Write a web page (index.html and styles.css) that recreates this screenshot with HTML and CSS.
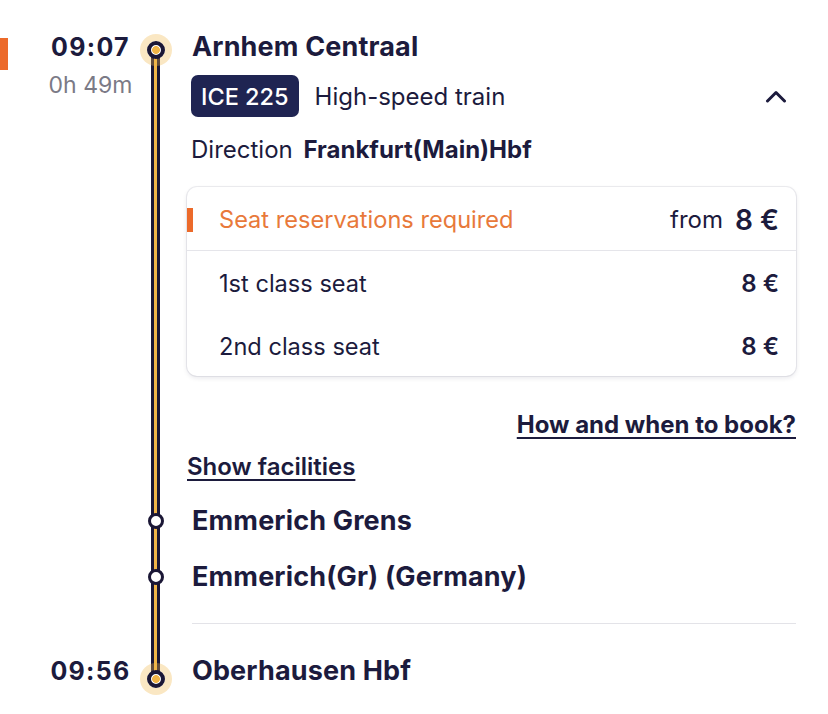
FILE: index.html
```html
<!DOCTYPE html>
<html lang="en">
<head>
<meta charset="utf-8">
<title>Journey leg</title>
<link rel="stylesheet" href="styles.css">
</head>
<body>
<main class="leg">
  <section class="stop stop--origin">
    <div class="flag-col"><span class="flag"></span></div>
    <div class="time-col">
      <div class="time">09:07</div>
      <div class="duration">0h 49m</div>
    </div>
    <div class="track track--start"><span class="node node--major node--start"></span></div>
    <div class="body">
      <div class="stop-name">Arnhem Centraal</div>
      <div class="head">
        <div class="train">
          <span class="badge">ICE 225</span>
          <span class="train-type">High-speed train</span>
          <svg class="chevron" width="22" height="13" viewBox="0 0 22 13" aria-hidden="true"><polyline points="2.5,11 11,2.5 19.5,11" fill="none" stroke="#1c1b3d" stroke-width="3" stroke-linecap="round" stroke-linejoin="round"/></svg>
        </div>
        <div class="direction">Direction <strong class="dir-dest">Frankfurt(Main)Hbf</strong></div>
      </div>
      <div class="fare-card">
        <div class="fare-head">
          <span class="fare-flag"></span>
          <span class="fare-note">Seat reservations required</span>
          <span class="from">from</span>
          <span class="price price--big">8 €</span>
        </div>
        <div class="fare-row"><span>1st class seat</span><span class="price">8 €</span></div>
        <div class="fare-row"><span>2nd class seat</span><span class="price">8 €</span></div>
      </div>
      <div class="book"><a href="#" class="link">How and when to book?</a></div>
      <div class="facilities"><a href="#" class="link">Show facilities</a></div>
    </div>
  </section>

  <section class="stop stop--via">
    <div class="flag-col"></div>
    <div class="time-col"></div>
    <div class="track"><span class="node node--minor"></span></div>
    <div class="body"><div class="stop-name">Emmerich Grens</div></div>
  </section>

  <section class="stop stop--via">
    <div class="flag-col"></div>
    <div class="time-col"></div>
    <div class="track"><span class="node node--minor"></span></div>
    <div class="body"><div class="stop-name">Emmerich(Gr) (Germany)</div></div>
  </section>

  <section class="stop stop--sep">
    <div class="flag-col"></div>
    <div class="time-col"></div>
    <div class="track"></div>
    <div class="body"><hr class="divider"></div>
  </section>

  <section class="stop stop--dest">
    <div class="flag-col"></div>
    <div class="time-col"><div class="time">09:56</div></div>
    <div class="track track--end"><span class="node node--major node--end"></span></div>
    <div class="body"><div class="stop-name">Oberhausen Hbf</div></div>
  </section>
</main>
</body>
</html>
```

FILE: styles.css
```css
* { box-sizing: border-box; }

body {
  margin: 0;
  background: #ffffff;
  font-family: Inter, "Noto Sans", "Liberation Sans", sans-serif;
  color: #1c1b3d;
}

.leg {
  padding: 33px 32px 0 0;
}

.stop {
  display: grid;
  grid-template-columns: 46px 89px 40px 1fr;
}

.flag {
  display: block;
  width: 8px;
  height: 32px;
  margin-top: 5px;
  background: #ec6a2a;
}

.time-col {
  text-align: center;
}

.time {
  font-size: 25px;
  font-weight: 700;
  line-height: 28px;
  letter-spacing: 1.3px;
}

.duration {
  margin-top: 10px;
  font-size: 23px;
  line-height: 28px;
  color: #7b7a86;
}

/* timeline */
.track {
  position: relative;
}

.track::before {
  content: "";
  position: absolute;
  left: 16px;
  width: 9px;
  top: 0;
  bottom: 0;
  background: linear-gradient(to right, #1b1736 0 3px, #f1b548 3px 6px, #1b1736 6px 9px);
}

.track--start::before { top: 17px; }
.track--end::before { bottom: auto; height: 38px; }

.node {
  position: absolute;
  left: 20.5px;
  border-radius: 50%;
  transform: translate(-50%, -50%);
}

.node--major {
  width: 18px;
  height: 18px;
  border: 4px solid #1b1736;
  background: radial-gradient(circle, #f1b548 0 3.6px, #ffffff 4.2px);
  box-shadow: 0 0 0 7px rgba(241, 181, 72, 0.33);
}

.node--start { top: 17px; }
.node--end { top: 38px; }

.node--minor {
  top: 28px;
  width: 16px;
  height: 16px;
  border: 3px solid #1b1736;
  background: #ffffff;
}

/* body column */
.body {
  padding-left: 12px;
  min-width: 0;
}

.stop--origin .body { padding-bottom: 13px; }

.head { padding-left: 4px; }

.stop-name {
  padding-left: 5px;
  font-size: 27px;
  font-weight: 700;
  line-height: 28px;
  letter-spacing: 0.15px;
}

.train {
  display: flex;
  align-items: center;
  margin-top: 14px;
}

.badge {
  display: flex;
  align-items: center;
  height: 42px;
  padding: 0 10px;
  border-radius: 7px;
  background: #1f2452;
  color: #ffffff;
  font-size: 23.5px;
  font-weight: 500;
}

.train-type {
  margin-left: 16px;
  font-size: 24px;
}

.chevron {
  margin-left: auto;
  margin-right: 9px;
}

.direction {
  margin-top: 20px;
  font-size: 24px;
  line-height: 26px;
}

.dir-dest {
  margin-left: 4px;
  font-weight: 700;
  font-size: 24px;
}

/* fare card */
.fare-card {
  margin-top: 24px;
  border-radius: 10px;
  background: #ffffff;
  box-shadow: 0 0 0 1px rgba(20, 20, 60, 0.07), 0 2px 5px rgba(20, 20, 60, 0.1);
  overflow: hidden;
  font-size: 23.6px;
}

.fare-head {
  display: flex;
  align-items: center;
  height: 64px;
  padding: 2px 17px 0 0;
  border-bottom: 1px solid #e5e5ea;
}

.fare-flag {
  width: 6px;
  height: 24px;
  background: #ec6a2a;
}

.fare-note {
  margin-left: 26px;
  color: #e8793a;
}

.from {
  margin-left: auto;
  font-size: 24px;
}

.price {
  font-weight: 600;
  font-size: 24px;
}

.price--big {
  margin-left: 12px;
  font-size: 28px;
}

.fare-row {
  display: flex;
  align-items: center;
  justify-content: space-between;
  height: 63px;
  padding: 2px 17px 0 32px;
}

.fare-row:last-child { height: 62px; }

/* links */
.link {
  color: #1c1b3d;
  text-decoration: underline;
  text-decoration-thickness: 2px;
  text-underline-offset: 4px;
}

.book {
  margin-top: 36px;
  text-align: right;
  font-size: 24px;
  font-weight: 700;
  line-height: 26px;
}

.facilities {
  margin-top: 16px;
  font-size: 24px;
  font-weight: 600;
  line-height: 26px;
}

/* stops */
.stop--via .body {
  padding-top: 14px;
  padding-bottom: 14px;
}

.stop--sep .body { height: 36px; }

.divider {
  margin: 18px 0 0 5px;
  border: 0;
  border-top: 1px solid #e3e3e8;
}

.stop--dest .body,
.stop--dest .time-col {
  padding-top: 16px;
}

.stop--dest .body { padding-bottom: 12px; }
```
